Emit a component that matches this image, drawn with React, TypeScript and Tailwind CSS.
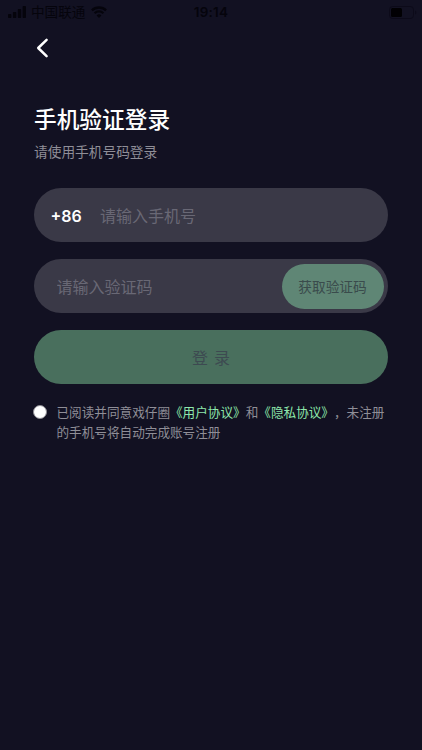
import { useState } from "react";

function StatusBar() {
  return (
    <div className="grid h-6 grid-cols-3 items-center pl-2 pr-[5px] text-[#05040c]">
      <div className="flex items-center">
        <svg width="18" height="12" viewBox="0 0 18 12" fill="currentColor">
          <rect x="0" y="8" width="3.4" height="4" rx="0.8" />
          <rect x="4.9" y="6" width="3.4" height="6" rx="0.8" />
          <rect x="9.8" y="3" width="3.4" height="9" rx="0.8" />
          <rect x="14.6" y="0" width="3.4" height="12" rx="0.8" />
        </svg>
        <span className="ml-[5px] h-6 text-[13.6px] leading-[22px]">中国联通</span>
        <svg
          className="ml-[6px]"
          width="16"
          height="12"
          viewBox="0 0 16 12"
          fill="none"
          stroke="currentColor"
          strokeWidth="2.3"
        >
          <path d="M0.9 4.4a10.1 10.1 0 0 1 14.2 0" />
          <path d="M3.6 7.3a6.2 6.2 0 0 1 8.8 0" />
          <path d="M8 12 5.6 9.5a3.4 3.4 0 0 1 4.8 0Z" fill="currentColor" stroke="none" />
        </svg>
      </div>
      <span className="-ml-[3px] text-center font-[Inter] text-[13.5px] font-semibold tracking-[0.2px]">
        19:14
      </span>
      <svg className="justify-self-end" width="28" height="13" viewBox="0 0 28 13" fill="none">
        <rect x="0.5" y="0.5" width="24" height="12" rx="3.2" stroke="#0c0a19" />
        <rect x="2" y="2" width="11" height="9" rx="1.5" fill="#010003" />
        <path d="M26.2 4.5v4c1.5-.6 1.5-3.4 0-4Z" fill="#0c0a19" />
      </svg>
    </div>
  );
}

export default function App() {
  const [phone, setPhone] = useState("");
  const [code, setCode] = useState("");
  const [agreed, setAgreed] = useState(false);

  return (
    <main className="h-[750px] w-full max-w-[422px] overflow-hidden bg-[#121122] font-['Noto_Sans_CJK_SC',sans-serif]">
      <StatusBar />

      <header className="flex h-[47px] items-center px-[34px]">
        <button aria-label="返回">
          <svg width="16" height="20" viewBox="0 0 16 20" fill="none">
            <path
              d="M12.6 1.8 4.2 10l8.4 8.2"
              stroke="#fff"
              strokeWidth="2.5"
              strokeLinecap="round"
              strokeLinejoin="round"
            />
          </svg>
        </button>
      </header>

      <section className="px-[34px] pt-8">
        <h1 className="text-[22.7px] font-medium leading-8 text-white">手机验证登录</h1>
        <p className="mt-[6px] text-[13.7px] leading-5 text-[#8f8e97]">请使用手机号码登录</p>

        <div className="mt-[27px] flex h-[54px] items-center rounded-full bg-[#3a3947] pl-[16.5px] pr-6">
          <span className="w-[49.5px] shrink-0 pt-[2px] font-[Inter] text-base font-semibold text-white">
            +86
          </span>
          <input
            className="min-w-0 flex-1 bg-transparent text-base text-white outline-none placeholder:text-[#696875]"
            type="tel"
            placeholder="请输入手机号"
            value={phone}
            onChange={(e) => setPhone(e.target.value)}
          />
        </div>

        <div className="mt-[17px] flex h-[54px] items-center rounded-full bg-[#3a3947] pl-[22.5px] pr-1">
          <input
            className="min-w-0 flex-1 bg-transparent text-base text-white outline-none placeholder:text-[#696875]"
            placeholder="请输入验证码"
            value={code}
            onChange={(e) => setCode(e.target.value)}
          />
          <button className="h-[45px] w-[102px] shrink-0 rounded-full bg-[#5f8675] pr-px text-[13.7px] text-[#3a4b4c]">
            获取验证码
          </button>
        </div>

        <button className="mt-[17px] h-[54px] w-full rounded-full bg-[#496f5d] text-base text-[#3d4a51] [word-spacing:2.5px]">
          登 录
        </button>

        <div className="mt-[18px] flex items-start">
          <button
            role="checkbox"
            aria-checked={agreed}
            aria-label="同意协议"
            onClick={() => setAgreed(!agreed)}
            className={`mt-[3px] -ml-px size-[14px] shrink-0 rounded-full border border-[#8d8c93] ${agreed ? "bg-[#8ee8ac]" : "bg-white"}`}
          />
          <p className="ml-[9.5px] w-[331px] text-[12.62px] leading-5 text-[#8f8e97] [text-spacing-trim:space-all]">
            已阅读并同意戏仔圈<span className="text-[#8ee8ac]">《用户协议》</span>和
            <span className="text-[#8ee8ac]">《隐私协议》</span>，未注册
            <br />
            的手机号将自动完成账号注册
          </p>
        </div>
      </section>
    </main>
  );
}
